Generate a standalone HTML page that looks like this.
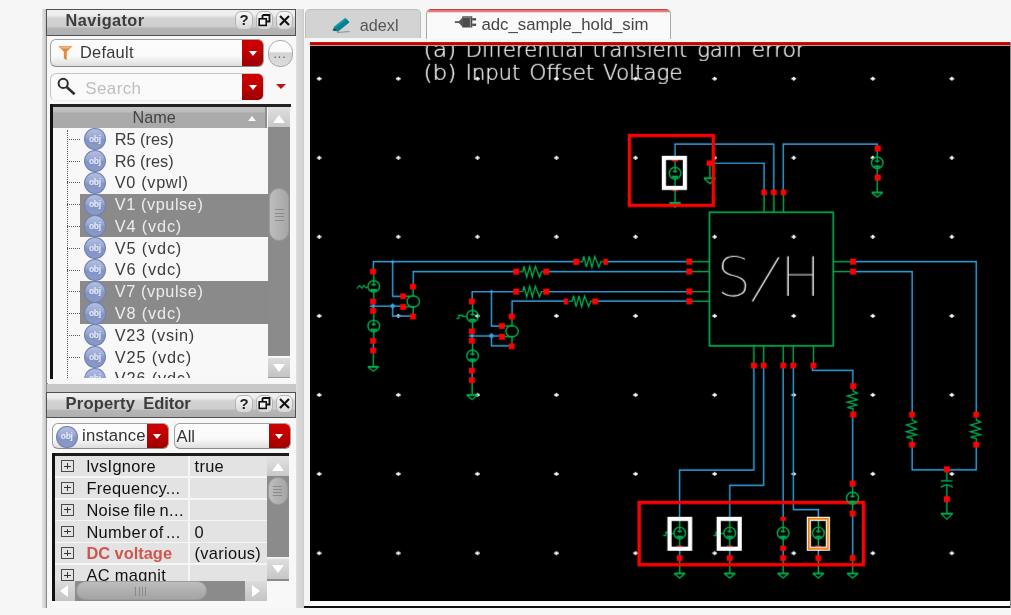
<!DOCTYPE html><html><head><meta charset="utf-8"><title>adc_sample_hold_sim</title><style>
html,body{margin:0;padding:0}
body{width:1011px;height:615px;overflow:hidden;background:#f6f6f6;position:relative;font-family:"Liberation Sans","DejaVu Sans",sans-serif;font-size:16.5px;color:#333}
.a{position:absolute}
.t{position:absolute;white-space:nowrap;line-height:20px}
.tb{border:1px solid #505050;box-sizing:border-box;background:linear-gradient(#f0f0f0 0,#ededed 21%,#d3d3d3 33%,#cecece 66%,#b5b5b5 73%,#b0b0b0 100%)}
.tbt{font-weight:bold;font-size:16.6px;color:#3c3c3c}
.wb{box-sizing:border-box;border:1px solid #b4b4b4;border-radius:6px;background:linear-gradient(#f8f8f8,#d8d8d8);width:17.5px;height:18.5px}
.cb{box-sizing:border-box;border:1px solid #a0a0a0;border-bottom-color:#888;border-radius:6px;background:linear-gradient(#fcfcfc 0,#fafafa 60%,#dedede 100%);overflow:hidden}
.rb{position:absolute;right:-1px;top:-1px;bottom:-1px;border-radius:0 6px 6px 0;background:linear-gradient(#d00000 0,#c00000 45%,#980000 100%)}
.rb:after{content:"";position:absolute;left:50%;top:50%;margin:-2.6px 0 0 -4.8px;border:4.8px solid transparent;border-top:5px solid #fff;border-bottom:0}
.row{position:absolute;left:80px;width:188px;height:21.8px;background:#8a8a8a}
.ic{position:absolute;width:21.8px;height:22.2px;border-radius:50%;box-sizing:border-box;border:1.6px solid #6f81b2;background:linear-gradient(#b2bfe2 0,#99a9d3 40%,#8393c3 55%,#8a9bc9 100%)}
.ic span{position:absolute;left:0;right:0;top:4.5px;text-align:center;font-size:8.5px;line-height:10px;color:#e8ecf8;font-weight:bold;letter-spacing:-.3px}
.pm{position:absolute;left:61px;width:12.6px;height:11.8px;box-sizing:border-box;border:1px solid #4a4a4a}
.pm:before{content:"";position:absolute;left:2px;right:2px;top:4.4px;height:1px;background:#333}
.pm:after{content:"";position:absolute;top:2px;bottom:2px;left:4.8px;width:1px;background:#333}
.pt{color:#111}
</style></head><body><div id="w" style="position:absolute;left:0;top:0;width:1011px;height:615px;will-change:transform">
<div class="a" style="left:42px;top:9px;width:4px;height:599px;background:linear-gradient(90deg,#e6e6e6,#d4d4d4 60%,#c4c4c4)"></div><div class="a" style="left:46px;top:9px;width:1.6px;height:599px;background:#8c8c8c"></div>
<div class="a" style="left:295.5px;top:9px;width:8.5px;height:599px;background:linear-gradient(90deg,#e2e2e2 0,#d6d6d6 25%,#d4d4d4 75%,#cacaca 100%)"></div>
<div class="a" style="left:46.5px;top:35px;width:249px;height:348px;background:#f8f8f8"></div>
<div class="a" style="left:46.5px;top:417px;width:249px;height:191px;background:#f8f8f8"></div>
<div class="a" style="left:46.5px;top:383.5px;width:249px;height:8.5px;background:#c8c8c8"></div>
<div class="a tb" style="left:46px;top:9px;width:250px;height:26.5px"></div>
<div class="t tbt" style="left:65.6px;top:10.3px;font-size:16.3px;letter-spacing:.42px">Navigator</div>
<div class="a wb" style="left:235.2px;top:11px"></div>
<div class="a wb" style="left:255.5px;top:11px"></div>
<div class="a wb" style="left:275.8px;top:11px"></div>
<div class="t" style="left:239.6px;top:10px;font-weight:bold;font-size:15px;color:#222">?</div>
<svg class="a" style="left:258px;top:13.6px" width="13" height="13" viewBox="0 0 13 13"><path d="M4.5 1h7v6.5h-2.5M4.5 1v3" fill="none" stroke="#111" stroke-width="1.8"/><rect x="1.2" y="4.8" width="7" height="6.6" fill="#f4f4f4" stroke="#111" stroke-width="1.6"/></svg>
<svg class="a" style="left:279.2px;top:14.8px" width="11" height="11" viewBox="0 0 11 11"><path d="M1 1L10 10M10 1L1 10" stroke="#111" stroke-width="2.1"/></svg>
<div class="a cb" style="left:50.2px;top:39.2px;width:214.3px;height:28px"><div class="rb" style="width:22px"></div></div>
<svg class="a" style="left:56.2px;top:44.8px" width="18.6" height="16.6" viewBox="0 0 14 15"><path d="M0.5 0.8h13l-5.2 5.4v7.6l-2.6 -1.6v-6z" fill="#e08a3c"/><path d="M1.5 1.2h11l-2 2h-7z" fill="#f0b080"/></svg>
<div class="t" style="left:80px;top:41.9px;font-size:16.4px;letter-spacing:.25px;color:#3a3a3a">Default</div>
<div class="a" style="left:268.4px;top:40px;width:24.4px;height:26.6px;box-sizing:border-box;border:1px solid #aaa;border-radius:12px;background:linear-gradient(#fdfdfd 0,#fafafa 42%,#d4d4d4 48%,#dcdcdc 100%)"></div>
<div class="t" style="left:273.2px;top:43.4px;font-size:14px;color:#6c6c6c;letter-spacing:.5px">...</div>
<div class="a cb" style="left:50.2px;top:73.2px;width:214.3px;height:28.3px;border-color:#c4c4c4 #d0d0d0 #ececec #c4c4c4;background:#fafafa"><div class="rb" style="width:22px"></div></div>
<svg class="a" style="left:55px;top:75px" width="24" height="24" viewBox="0 0 24 24"><circle cx="8.2" cy="8.4" r="4.6" fill="none" stroke="#2e2e2e" stroke-width="2"/><path d="M11.6 12L19.6 19.2" stroke="#2e2e2e" stroke-width="2.6"/></svg>
<div class="t" style="left:85.3px;top:79px;font-size:17px;letter-spacing:.38px;color:#bebebe">Search</div>
<div class="a" style="left:275.8px;top:84px;border:5.2px solid transparent;border-top:5.6px solid #c01010;border-bottom:0"></div>
<div class="a" style="left:50px;top:104px;width:241.4px;height:2.8px;background:#222"></div>
<div class="a" style="left:50px;top:104px;width:3.2px;height:274.5px;background:#111"></div>
<div class="a" style="left:53.2px;top:106.8px;width:213.6px;height:21.2px;background:linear-gradient(#c4c4c4 0,#bcbcbc 22%,#ababab 30%,#a9a9a9 100%);border-right:2px solid #8e8e8e;box-sizing:border-box"></div>
<div class="t" style="left:132.6px;top:107.4px;font-size:16.2px;color:#444">Name</div>
<div class="a" style="left:248.2px;top:116px;border:4.3px solid transparent;border-bottom:5.6px solid #fbfbfb;border-top:0"></div>
<div class="a" style="left:268.4px;top:106.8px;width:21.4px;height:271px;background:#8b8b8b"></div>
<div class="a" style="left:268.4px;top:106.8px;width:21.4px;height:20.6px;background:linear-gradient(#e0e0e0,#c6c6c6)"></div>
<div class="a" style="left:273px;top:115px;border:6px solid transparent;border-bottom:8px solid #fff;border-top:0"></div>
<div class="a" style="left:268.4px;top:356px;width:21.4px;height:2.2px;background:#f8f8f8"></div>
<div class="a" style="left:268.4px;top:358px;width:21.4px;height:19.6px;background:linear-gradient(#dcdcdc,#c4c4c4);border-bottom:1px solid #9a9a9a;box-sizing:border-box"></div>
<div class="a" style="left:273px;top:364px;border:6px solid transparent;border-top:8px solid #fff;border-bottom:0"></div>
<div class="a" style="left:269.4px;top:188.2px;width:19.6px;height:52.4px;border-radius:10px;background:linear-gradient(90deg,#bdbdbd,#b2b2b2 50%,#a6a6a6);box-sizing:border-box;border:1px solid #9c9c9c"></div>
<div class="a" style="left:274.6px;top:209.4px;width:9px;height:1px;background:#8a8a8a"></div>
<div class="a" style="left:274.6px;top:212.8px;width:9px;height:1px;background:#8a8a8a"></div>
<div class="a" style="left:274.6px;top:216.20000000000002px;width:9px;height:1px;background:#8a8a8a"></div>
<div class="a" style="left:274.6px;top:219.6px;width:9px;height:1px;background:#8a8a8a"></div>
<div class="a" style="left:53.2px;top:128px;width:215.2px;height:250.4px;overflow:hidden">
<div class="a" style="left:13.6px;top:2px;width:0;height:260px;border-left:1.2px dotted #555"></div>
<div class="a" style="left:26.8px;top:65.6px;width:190px;height:21.8px;background:#8a8a8a"></div>
<div class="a" style="left:26.8px;top:87.4px;width:190px;height:21.8px;background:#8a8a8a"></div>
<div class="a" style="left:26.8px;top:152.8px;width:190px;height:21.8px;background:#8a8a8a"></div>
<div class="a" style="left:26.8px;top:174.5px;width:190px;height:21.8px;background:#8a8a8a"></div>
<div class="a" style="left:14px;top:10.8px;width:13px;height:0;border-top:1.2px dotted #555"></div>
<div class="ic" style="left:30.8px;top:0.2px"><span>obj</span></div>
<div class="t" style="left:61.6px;top:0.7px;font-size:16.3px;letter-spacing:0.00px;color:#3c3c3c">R5 (res)</div>
<div class="a" style="left:14px;top:32.6px;width:13px;height:0;border-top:1.2px dotted #555"></div>
<div class="ic" style="left:30.8px;top:22.0px"><span>obj</span></div>
<div class="t" style="left:61.6px;top:22.5px;font-size:16.3px;letter-spacing:0.00px;color:#3c3c3c">R6 (res)</div>
<div class="a" style="left:14px;top:54.4px;width:13px;height:0;border-top:1.2px dotted #555"></div>
<div class="ic" style="left:30.8px;top:43.8px"><span>obj</span></div>
<div class="t" style="left:61.6px;top:44.3px;font-size:16.3px;letter-spacing:0.67px;color:#3c3c3c">V0 (vpwl)</div>
<div class="a" style="left:14px;top:76.1px;width:13px;height:0;border-top:1.2px dotted #555"></div>
<div class="ic" style="left:30.8px;top:65.5px"><span>obj</span></div>
<div class="t" style="left:61.6px;top:66.0px;font-size:16.3px;letter-spacing:0.57px;color:#ececec">V1 (vpulse)</div>
<div class="a" style="left:14px;top:97.9px;width:13px;height:0;border-top:1.2px dotted #555"></div>
<div class="ic" style="left:30.8px;top:87.3px"><span>obj</span></div>
<div class="t" style="left:61.6px;top:87.8px;font-size:16.3px;letter-spacing:0.84px;color:#ececec">V4 (vdc)</div>
<div class="a" style="left:14px;top:119.7px;width:13px;height:0;border-top:1.2px dotted #555"></div>
<div class="ic" style="left:30.8px;top:109.1px"><span>obj</span></div>
<div class="t" style="left:61.6px;top:109.6px;font-size:16.3px;letter-spacing:0.84px;color:#3c3c3c">V5 (vdc)</div>
<div class="a" style="left:14px;top:141.5px;width:13px;height:0;border-top:1.2px dotted #555"></div>
<div class="ic" style="left:30.8px;top:130.9px"><span>obj</span></div>
<div class="t" style="left:61.6px;top:131.4px;font-size:16.3px;letter-spacing:0.84px;color:#3c3c3c">V6 (vdc)</div>
<div class="a" style="left:14px;top:163.3px;width:13px;height:0;border-top:1.2px dotted #555"></div>
<div class="ic" style="left:30.8px;top:152.7px"><span>obj</span></div>
<div class="t" style="left:61.6px;top:153.2px;font-size:16.3px;letter-spacing:0.57px;color:#ececec">V7 (vpulse)</div>
<div class="a" style="left:14px;top:185.0px;width:13px;height:0;border-top:1.2px dotted #555"></div>
<div class="ic" style="left:30.8px;top:174.4px"><span>obj</span></div>
<div class="t" style="left:61.6px;top:174.9px;font-size:16.3px;letter-spacing:0.84px;color:#ececec">V8 (vdc)</div>
<div class="a" style="left:14px;top:206.8px;width:13px;height:0;border-top:1.2px dotted #555"></div>
<div class="ic" style="left:30.8px;top:196.2px"><span>obj</span></div>
<div class="t" style="left:61.6px;top:196.7px;font-size:16.3px;letter-spacing:0.68px;color:#3c3c3c">V23 (vsin)</div>
<div class="a" style="left:14px;top:228.6px;width:13px;height:0;border-top:1.2px dotted #555"></div>
<div class="ic" style="left:30.8px;top:218.0px"><span>obj</span></div>
<div class="t" style="left:61.6px;top:218.5px;font-size:16.3px;letter-spacing:0.85px;color:#3c3c3c">V25 (vdc)</div>
<div class="a" style="left:14px;top:250.4px;width:13px;height:0;border-top:1.2px dotted #555"></div>
<div class="ic" style="left:30.8px;top:239.8px"><span>obj</span></div>
<div class="t" style="left:61.6px;top:240.3px;font-size:16.3px;letter-spacing:0.85px;color:#3c3c3c">V26 (vdc)</div>
</div>
<div class="a tb" style="left:46px;top:392px;width:250px;height:26px"></div>
<div class="t tbt" style="left:65.6px;top:393.5px;letter-spacing:.15px">Property <span style="position:absolute;left:77.6px;top:0;letter-spacing:-.1px">Editor</span></div>
<div class="a wb" style="left:235.2px;top:394.6px"></div>
<div class="a wb" style="left:255.5px;top:394.6px"></div>
<div class="a wb" style="left:275.8px;top:394.6px"></div>
<div class="t" style="left:239.6px;top:393.6px;font-weight:bold;font-size:15px;color:#222">?</div>
<svg class="a" style="left:258px;top:397.20000000000005px" width="13" height="13" viewBox="0 0 13 13"><path d="M4.5 1h7v6.5h-2.5M4.5 1v3" fill="none" stroke="#111" stroke-width="1.8"/><rect x="1.2" y="4.8" width="7" height="6.6" fill="#f4f4f4" stroke="#111" stroke-width="1.6"/></svg>
<svg class="a" style="left:279.2px;top:398.40000000000003px" width="11" height="11" viewBox="0 0 11 11"><path d="M1 1L10 10M10 1L1 10" stroke="#111" stroke-width="2.1"/></svg>
<div class="a cb" style="left:52px;top:423.4px;width:117px;height:26px"><div class="rb" style="width:22px"></div></div>
<div class="ic" style="left:55.8px;top:425.8px"><span>obj</span></div>
<div class="t" style="left:82px;top:426.4px;font-size:16.7px;letter-spacing:.2px;color:#333">instance</div>
<div class="a cb" style="left:173.5px;top:423.4px;width:117.4px;height:26px"><div class="rb" style="width:22.4px"></div></div>
<div class="t" style="left:176.6px;top:426.6px;font-size:16.6px;color:#333">All</div>
<div class="a" style="left:51.8px;top:453px;width:237.4px;height:3px;background:#1c1c1c"></div>
<div class="a" style="left:51.8px;top:453px;width:3px;height:148px;background:#111"></div>
<div class="a" style="left:54.8px;top:456px;width:212.4px;height:124.6px;background:#e3e3e3;overflow:hidden">
<div class="pm" style="left:6.2px;top:4.4px"></div>
<div class="t pt" style="left:31.6px;top:0.4px;font-size:16.4px;letter-spacing:.35px;word-spacing:0px">lvsIgnore</div>
<div class="t pt" style="left:139.8px;top:0.4px;font-size:16.4px;letter-spacing:.3px">true</div>
<div class="a" style="left:0;top:20.4px;width:213px;height:1.6px;background:#f6f6f6"></div>
<div class="pm" style="left:6.2px;top:26.1px"></div>
<div class="t pt" style="left:31.6px;top:22.1px;font-size:16.4px;letter-spacing:.35px;word-spacing:0px">Frequency...</div>
<div class="a" style="left:0;top:42.1px;width:213px;height:1.6px;background:#f6f6f6"></div>
<div class="pm" style="left:6.2px;top:47.9px"></div>
<div class="t pt" style="left:31.6px;top:43.9px;font-size:16.4px;letter-spacing:.35px;word-spacing:-1.3px">Noise file n...</div>
<div class="a" style="left:0;top:63.9px;width:213px;height:1.6px;background:#f6f6f6"></div>
<div class="pm" style="left:6.2px;top:69.7px"></div>
<div class="t pt" style="left:31.6px;top:65.7px;font-size:16.4px;letter-spacing:.35px;word-spacing:-2.5px">Number of ...</div>
<div class="t pt" style="left:139.8px;top:65.7px;font-size:16.4px;letter-spacing:.3px">0</div>
<div class="a" style="left:0;top:85.6px;width:213px;height:1.6px;background:#f6f6f6"></div>
<div class="pm" style="left:6.2px;top:91.4px"></div>
<div class="t" style="left:31.6px;top:87.4px;font-size:16.4px;font-weight:bold;color:#cf5650">DC voltage</div>
<div class="t pt" style="left:139.8px;top:87.4px;font-size:16.4px;letter-spacing:.3px">(various)</div>
<div class="a" style="left:0;top:107.3px;width:213px;height:1.6px;background:#f6f6f6"></div>
<div class="pm" style="left:6.2px;top:113.2px"></div>
<div class="t pt" style="left:31.6px;top:109.2px;font-size:16.4px;letter-spacing:.35px;word-spacing:0px">AC magnit</div>
<div class="a" style="left:133.4px;top:0;width:2px;height:130px;background:#f6f6f6"></div>
</div>
<div class="a" style="left:267.2px;top:456px;width:21.6px;height:124.6px;background:#8b8b8b"></div>
<div class="a" style="left:267.2px;top:456px;width:21.6px;height:20px;background:linear-gradient(#e2e2e2,#c8c8c8)"></div>
<div class="a" style="left:272px;top:463.4px;border:6px solid transparent;border-bottom:8px solid #fff;border-top:0"></div>
<div class="a" style="left:268.2px;top:477px;width:19.6px;height:28px;border-radius:10px;background:linear-gradient(90deg,#bdbdbd,#b2b2b2 50%,#a6a6a6);box-sizing:border-box;border:1px solid #9c9c9c"></div>
<div class="a" style="left:273.4px;top:485.6px;width:9px;height:1px;background:#8a8a8a"></div>
<div class="a" style="left:273.4px;top:488.8px;width:9px;height:1px;background:#8a8a8a"></div>
<div class="a" style="left:273.4px;top:492.0px;width:9px;height:1px;background:#8a8a8a"></div>
<div class="a" style="left:273.4px;top:495.20000000000005px;width:9px;height:1px;background:#8a8a8a"></div>
<div class="a" style="left:267.2px;top:557px;width:21.6px;height:2px;background:#f0f0f0"></div>
<div class="a" style="left:267.2px;top:559px;width:21.6px;height:20px;background:linear-gradient(#dedede,#c6c6c6)"></div>
<div class="a" style="left:272px;top:565px;border:6px solid transparent;border-top:8px solid #fff;border-bottom:0"></div>
<div class="a" style="left:54.8px;top:580.6px;width:212.4px;height:20.6px;background:#8b8b8b"></div>
<div class="a" style="left:54.8px;top:580.6px;width:20px;height:20.6px;background:linear-gradient(#dcdcdc,#c4c4c4)"></div>
<div class="a" style="left:60px;top:584.8px;border:6px solid transparent;border-right:8px solid #fff;border-left:0"></div>
<div class="a" style="left:76.4px;top:581.4px;width:130.4px;height:19px;border-radius:10px;background:linear-gradient(#bdbdbd,#b0b0b0 50%,#a4a4a4);box-sizing:border-box;border:1px solid #9c9c9c"></div>
<div class="a" style="left:135.4px;top:586.6px;width:1px;height:9px;background:#8a8a8a"></div>
<div class="a" style="left:138.6px;top:586.6px;width:1px;height:9px;background:#8a8a8a"></div>
<div class="a" style="left:141.8px;top:586.6px;width:1px;height:9px;background:#8a8a8a"></div>
<div class="a" style="left:145.0px;top:586.6px;width:1px;height:9px;background:#8a8a8a"></div>
<div class="a" style="left:244.6px;top:580.6px;width:22.6px;height:20.6px;background:linear-gradient(#dcdcdc,#c4c4c4)"></div>
<div class="a" style="left:252px;top:584.8px;border:6px solid transparent;border-left:8px solid #fff;border-right:0"></div>
<div class="a" style="left:304.6px;top:9px;width:116.6px;height:29.4px;box-sizing:border-box;border:1px solid #bdbdbd;border-bottom:0;border-radius:5px 5px 0 0;background:#d3d3d3"></div>
<svg class="a" style="left:330px;top:15px" width="24" height="20" viewBox="330 15 24 20"><path d="M337 32.6L349.6 31.4" stroke="#9c9c9c" stroke-width="1.4"/><path d="M332.6 30.2L334.2 26.6L345.4 17.8L349.4 22.2L338 31.4z" fill="#0c9aa8"/><path d="M332.6 30.2L335.6 27.8L346.8 19.2L349.4 22.2L338 31.4z" fill="#08808e"/><path d="M332.6 30.2L334.6 28.6L336.4 30.8z" fill="#234"/></svg>
<div class="t" style="left:359.8px;top:15.4px;font-size:16.2px;color:#555">adexl</div>
<div class="a" style="left:426.4px;top:8.8px;width:244.2px;height:30px;box-sizing:border-box;border:1px solid #a8a8a8;border-top:0;border-bottom:0;border-radius:5px 5px 0 0;background:linear-gradient(#c44040 0,#c84848 1.3px,#e07474 1.5px,#e88c8c 3px,#fafafa 3.8px,#fafafa 100%)"></div>
<svg class="a" style="left:454px;top:15px" width="24" height="14" viewBox="454 15 24 14"><path d="M454.9 22.1H460" stroke="#585858" stroke-width="1.9"/><path d="M458.8 21.2L462.6 17.4V26.8L458.8 23z" fill="#5a5a5a"/><rect x="462.2" y="16.3" width="10.1" height="11.2" fill="#4c4c4c"/><rect x="463" y="16.3" width="8" height="1.6" fill="#808080"/><rect x="469.8" y="17.6" width="1.2" height="9.4" fill="#8c8c8c"/><rect x="472.2" y="18.1" width="3.9" height="2.4" fill="#505050"/><rect x="472.2" y="23.6" width="3.9" height="2.4" fill="#505050"/></svg>
<div class="t" style="left:481.4px;top:14.6px;font-size:16.8px;color:#454545">adc_sample_hold_sim</div>
<div class="a" style="left:310px;top:42.1px;width:700px;height:4.1px;background:linear-gradient(#d42020 0,#c80000 25%,#c40000 74%,#b0a0a0 78%,#a8a8a8 100%)"></div>
<div class="a" style="left:304px;top:38.4px;width:6.4px;height:570px;background:#f4f4f4"></div>
<div class="a" style="left:304px;top:601.1px;width:707px;height:5px;background:#fbfbfb"></div>
<div class="a" style="left:304.2px;top:606.1px;width:706.8px;height:2.3px;background:#101010"></div><div class="a" style="left:1010px;top:42px;width:1px;height:566px;background:#8a8a8a"></div>
<svg class="a" style="left:310.2px;top:46.2px" width="699.8" height="554.9" viewBox="310.2 46.2 699.8 554.9" font-family='"DejaVu Sans Light","DejaVu Sans","Liberation Sans",sans-serif' font-weight="200">
<rect x="310" y="46" width="702" height="556" fill="#000"/>
<path d="M317.1 78.9h4.6M319.4 77v3.8" stroke="#fff" stroke-width="1.7"/>
<path d="M317.1 158h4.6M319.4 156.1v3.8" stroke="#fff" stroke-width="1.7"/>
<path d="M317.1 237h4.6M319.4 235.1v3.8" stroke="#fff" stroke-width="1.7"/>
<path d="M317.1 316.1h4.6M319.4 314.2v3.8" stroke="#fff" stroke-width="1.7"/>
<path d="M317.1 395.1h4.6M319.4 393.2v3.8" stroke="#fff" stroke-width="1.7"/>
<path d="M317.1 474.2h4.6M319.4 472.3v3.8" stroke="#fff" stroke-width="1.7"/>
<path d="M317.1 553.3h4.6M319.4 551.4v3.8" stroke="#fff" stroke-width="1.7"/>
<path d="M396.2 78.9h4.6M398.5 77v3.8" stroke="#fff" stroke-width="1.7"/>
<path d="M396.2 158h4.6M398.5 156.1v3.8" stroke="#fff" stroke-width="1.7"/>
<path d="M396.2 237h4.6M398.5 235.1v3.8" stroke="#fff" stroke-width="1.7"/>
<path d="M396.2 316.1h4.6M398.5 314.2v3.8" stroke="#fff" stroke-width="1.7"/>
<path d="M396.2 395.1h4.6M398.5 393.2v3.8" stroke="#fff" stroke-width="1.7"/>
<path d="M396.2 474.2h4.6M398.5 472.3v3.8" stroke="#fff" stroke-width="1.7"/>
<path d="M396.2 553.3h4.6M398.5 551.4v3.8" stroke="#fff" stroke-width="1.7"/>
<path d="M475.3 78.9h4.6M477.6 77v3.8" stroke="#fff" stroke-width="1.7"/>
<path d="M475.3 158h4.6M477.6 156.1v3.8" stroke="#fff" stroke-width="1.7"/>
<path d="M475.3 237h4.6M477.6 235.1v3.8" stroke="#fff" stroke-width="1.7"/>
<path d="M475.3 316.1h4.6M477.6 314.2v3.8" stroke="#fff" stroke-width="1.7"/>
<path d="M475.3 395.1h4.6M477.6 393.2v3.8" stroke="#fff" stroke-width="1.7"/>
<path d="M475.3 474.2h4.6M477.6 472.3v3.8" stroke="#fff" stroke-width="1.7"/>
<path d="M475.3 553.3h4.6M477.6 551.4v3.8" stroke="#fff" stroke-width="1.7"/>
<path d="M554.3 78.9h4.6M556.6 77v3.8" stroke="#fff" stroke-width="1.7"/>
<path d="M554.3 158h4.6M556.6 156.1v3.8" stroke="#fff" stroke-width="1.7"/>
<path d="M554.3 237h4.6M556.6 235.1v3.8" stroke="#fff" stroke-width="1.7"/>
<path d="M554.3 316.1h4.6M556.6 314.2v3.8" stroke="#fff" stroke-width="1.7"/>
<path d="M554.3 395.1h4.6M556.6 393.2v3.8" stroke="#fff" stroke-width="1.7"/>
<path d="M554.3 474.2h4.6M556.6 472.3v3.8" stroke="#fff" stroke-width="1.7"/>
<path d="M554.3 553.3h4.6M556.6 551.4v3.8" stroke="#fff" stroke-width="1.7"/>
<path d="M633.4 78.9h4.6M635.7 77v3.8" stroke="#fff" stroke-width="1.7"/>
<path d="M633.4 158h4.6M635.7 156.1v3.8" stroke="#fff" stroke-width="1.7"/>
<path d="M633.4 237h4.6M635.7 235.1v3.8" stroke="#fff" stroke-width="1.7"/>
<path d="M633.4 316.1h4.6M635.7 314.2v3.8" stroke="#fff" stroke-width="1.7"/>
<path d="M633.4 395.1h4.6M635.7 393.2v3.8" stroke="#fff" stroke-width="1.7"/>
<path d="M633.4 474.2h4.6M635.7 472.3v3.8" stroke="#fff" stroke-width="1.7"/>
<path d="M633.4 553.3h4.6M635.7 551.4v3.8" stroke="#fff" stroke-width="1.7"/>
<path d="M712.5 78.9h4.6M714.8 77v3.8" stroke="#fff" stroke-width="1.7"/>
<path d="M712.5 158h4.6M714.8 156.1v3.8" stroke="#fff" stroke-width="1.7"/>
<path d="M712.5 237h4.6M714.8 235.1v3.8" stroke="#fff" stroke-width="1.7"/>
<path d="M712.5 316.1h4.6M714.8 314.2v3.8" stroke="#fff" stroke-width="1.7"/>
<path d="M712.5 395.1h4.6M714.8 393.2v3.8" stroke="#fff" stroke-width="1.7"/>
<path d="M712.5 474.2h4.6M714.8 472.3v3.8" stroke="#fff" stroke-width="1.7"/>
<path d="M712.5 553.3h4.6M714.8 551.4v3.8" stroke="#fff" stroke-width="1.7"/>
<path d="M791.6 78.9h4.6M793.9 77v3.8" stroke="#fff" stroke-width="1.7"/>
<path d="M791.6 158h4.6M793.9 156.1v3.8" stroke="#fff" stroke-width="1.7"/>
<path d="M791.6 237h4.6M793.9 235.1v3.8" stroke="#fff" stroke-width="1.7"/>
<path d="M791.6 316.1h4.6M793.9 314.2v3.8" stroke="#fff" stroke-width="1.7"/>
<path d="M791.6 395.1h4.6M793.9 393.2v3.8" stroke="#fff" stroke-width="1.7"/>
<path d="M791.6 474.2h4.6M793.9 472.3v3.8" stroke="#fff" stroke-width="1.7"/>
<path d="M791.6 553.3h4.6M793.9 551.4v3.8" stroke="#fff" stroke-width="1.7"/>
<path d="M870.7 78.9h4.6M873 77v3.8" stroke="#fff" stroke-width="1.7"/>
<path d="M870.7 158h4.6M873 156.1v3.8" stroke="#fff" stroke-width="1.7"/>
<path d="M870.7 237h4.6M873 235.1v3.8" stroke="#fff" stroke-width="1.7"/>
<path d="M870.7 316.1h4.6M873 314.2v3.8" stroke="#fff" stroke-width="1.7"/>
<path d="M870.7 395.1h4.6M873 393.2v3.8" stroke="#fff" stroke-width="1.7"/>
<path d="M870.7 474.2h4.6M873 472.3v3.8" stroke="#fff" stroke-width="1.7"/>
<path d="M870.7 553.3h4.6M873 551.4v3.8" stroke="#fff" stroke-width="1.7"/>
<path d="M949.7 78.9h4.6M952 77v3.8" stroke="#fff" stroke-width="1.7"/>
<path d="M949.7 158h4.6M952 156.1v3.8" stroke="#fff" stroke-width="1.7"/>
<path d="M949.7 237h4.6M952 235.1v3.8" stroke="#fff" stroke-width="1.7"/>
<path d="M949.7 316.1h4.6M952 314.2v3.8" stroke="#fff" stroke-width="1.7"/>
<path d="M949.7 395.1h4.6M952 393.2v3.8" stroke="#fff" stroke-width="1.7"/>
<path d="M949.7 474.2h4.6M952 472.3v3.8" stroke="#fff" stroke-width="1.7"/>
<path d="M949.7 553.3h4.6M952 551.4v3.8" stroke="#fff" stroke-width="1.7"/>
<rect x="709.6" y="212.4" width="123.8" height="133.6" fill="none" stroke="#00b050" stroke-width="1.7"/>
<polyline points="689.6,261.8 709.6,261.8" fill="none" stroke="#00b050" stroke-width="1.4"/>
<polyline points="689.6,271.7 709.6,271.7" fill="none" stroke="#00b050" stroke-width="1.4"/>
<polyline points="689.6,291.7 709.6,291.7" fill="none" stroke="#00b050" stroke-width="1.4"/>
<polyline points="689.6,301.4 709.6,301.4" fill="none" stroke="#00b050" stroke-width="1.4"/>
<polyline points="833.4,261.8 853.2,261.8" fill="none" stroke="#00b050" stroke-width="1.4"/>
<polyline points="833.4,271.7 853.2,271.7" fill="none" stroke="#00b050" stroke-width="1.4"/>
<polyline points="764.2,192.6 764.2,212.4" fill="none" stroke="#00b050" stroke-width="1.4"/>
<polyline points="774,192.6 774,212.4" fill="none" stroke="#00b050" stroke-width="1.4"/>
<polyline points="783.6,192.6 783.6,212.4" fill="none" stroke="#00b050" stroke-width="1.4"/>
<polyline points="754,346 754,365.6" fill="none" stroke="#00b050" stroke-width="1.4"/>
<polyline points="763.8,346 763.8,365.6" fill="none" stroke="#00b050" stroke-width="1.4"/>
<polyline points="783.4,346 783.4,365.6" fill="none" stroke="#00b050" stroke-width="1.4"/>
<polyline points="793.4,346 793.4,365.6" fill="none" stroke="#00b050" stroke-width="1.4"/>
<polyline points="813.6,346 813.6,365.6" fill="none" stroke="#00b050" stroke-width="1.4"/>
<polyline points="373.5,271.8 373.5,261.8 576.4,261.8" fill="none" stroke="#35a4e4" stroke-width="1.4"/>
<polyline points="605.6,261.8 689.6,261.8" fill="none" stroke="#35a4e4" stroke-width="1.4"/>
<polyline points="413.4,286.8 413.4,271.8 516.4,271.8" fill="none" stroke="#35a4e4" stroke-width="1.4"/>
<polyline points="546.4,271.8 689.6,271.8" fill="none" stroke="#35a4e4" stroke-width="1.4"/>
<polyline points="472.3,301.4 472.3,291.7 516.4,291.7" fill="none" stroke="#35a4e4" stroke-width="1.4"/>
<polyline points="546.4,291.7 689.6,291.7" fill="none" stroke="#35a4e4" stroke-width="1.4"/>
<polyline points="512.2,316.6 512.2,301.3 566,301.3" fill="none" stroke="#35a4e4" stroke-width="1.4"/>
<polyline points="595.4,301.3 689.6,301.3" fill="none" stroke="#35a4e4" stroke-width="1.4"/>
<polyline points="579.3,261.8 582.6,261.8 584,256.5 586.5,267.3 589.4,256.5 592,267.3 595,256.5 599,267.3 601,261.8 603.8,261.8" fill="none" stroke="#00b050" stroke-width="1.3"/>
<polyline points="519.4,271.8 522.8,271.8 524.2,266.5 526.8,277.3 529.8,266.5 532.4,277.3 535.5,266.5 539.6,277.3 541.7,271.8 544.6,271.8" fill="none" stroke="#00b050" stroke-width="1.3"/>
<polyline points="519.4,291.7 522.8,291.7 524.2,286.4 526.8,297.2 529.8,286.4 532.4,297.2 535.5,286.4 539.6,297.2 541.7,291.7 544.6,291.7" fill="none" stroke="#00b050" stroke-width="1.3"/>
<polyline points="568.9,301.3 572.2,301.3 573.7,296 576.2,306.8 579.1,296 581.7,306.8 584.7,296 588.8,306.8 590.8,301.3 593.6,301.3" fill="none" stroke="#00b050" stroke-width="1.3"/>
<polyline points="373.5,301.6 373.5,311" fill="none" stroke="#35a4e4" stroke-width="1.4"/>
<polyline points="370.1,306.3 400.7,306.3" fill="none" stroke="#35a4e4" stroke-width="1.4"/>
<polyline points="392.8,261.9 392.8,296.5 403.3,296.5" fill="none" stroke="#35a4e4" stroke-width="1.4"/>
<polyline points="392.8,306.3 392.8,316.2 413.1,316.2" fill="none" stroke="#35a4e4" stroke-width="1.4"/>
<polyline points="373.5,341 373.5,350.6" fill="none" stroke="#35a4e4" stroke-width="1.4"/>
<path d="M392.8 259.9l2 2l-2 2l-2 -2z" fill="#35a4e4"/>
<path d="M392.8 303.3l3 3l-3 3l-3 -3z" fill="#35a4e4"/>
<path d="M373.5 304.1l2.2 2.2l-2.2 2.2l-2.2 -2.2z" fill="#35a4e4"/>
<polyline points="373.9,271.8 373.9,286.3" fill="none" stroke="#00b050" stroke-width="1.4"/>
<polyline points="373.9,289.9 373.9,301.6" fill="none" stroke="#00b050" stroke-width="1.4"/>
<circle cx="373.9" cy="286.5" r="5.8" fill="none" stroke="#00b050" stroke-width="1.4"/>
<polyline points="371.6,284.8 376.2,284.8" fill="none" stroke="#00b050" stroke-width="1.4"/>
<polyline points="370.9,290 376.9,290" fill="none" stroke="#00b050" stroke-width="2"/>
<polyline points="357.1,288.9 359.7,285.7 362.1,288.5 363.9,285.5 366.3,288.1 368.1,287.1" fill="none" stroke="#00b050" stroke-width="1.2"/>
<polyline points="373.9,311 373.9,326" fill="none" stroke="#00b050" stroke-width="1.4"/>
<polyline points="373.9,329.6 373.9,341" fill="none" stroke="#00b050" stroke-width="1.4"/>
<circle cx="373.9" cy="326.2" r="5.8" fill="none" stroke="#00b050" stroke-width="1.4"/>
<polyline points="371.6,324.5 376.2,324.5" fill="none" stroke="#00b050" stroke-width="1.4"/>
<polyline points="370.9,329.7 376.9,329.7" fill="none" stroke="#00b050" stroke-width="2"/>
<polyline points="373.5,350.6 373.5,367" fill="none" stroke="#00b050" stroke-width="1.4"/>
<polyline points="367.9,367 379.1,367" fill="none" stroke="#00b050" stroke-width="1.9"/>
<polyline points="368.3,367.3 373.5,371.5 378.7,367.3" fill="none" stroke="#00b050" stroke-width="1.3"/>
<polyline points="413.3,286.8 413.3,296.3" fill="none" stroke="#00b050" stroke-width="1.4"/>
<polyline points="413.3,307 413.3,316.6" fill="none" stroke="#00b050" stroke-width="1.4"/>
<polyline points="403.3,296.3 415.3,296.3" fill="none" stroke="#00b050" stroke-width="1.4"/>
<polyline points="403.3,307 415.3,307" fill="none" stroke="#00b050" stroke-width="1.4"/>
<rect x="407.2" y="296.3" width="12.4" height="10.7" rx="5.3" ry="5.3" fill="none" stroke="#00b050" stroke-width="1.4"/>
<rect x="370.3" y="268.9" width="5.8" height="5.8" fill="#ff0000"/>
<rect x="370.3" y="298.8" width="5.8" height="5.8" fill="#ff0000"/>
<rect x="370.3" y="308.2" width="5.8" height="5.8" fill="#ff0000"/>
<rect x="370.3" y="338.1" width="5.8" height="5.8" fill="#ff0000"/>
<rect x="370.3" y="347.7" width="5.8" height="5.8" fill="#ff0000"/>
<rect x="400.4" y="293.5" width="5.8" height="5.8" fill="#ff0000"/>
<rect x="400.4" y="304.2" width="5.8" height="5.8" fill="#ff0000"/>
<rect x="410.2" y="283.9" width="5.8" height="5.8" fill="#ff0000"/>
<rect x="410.2" y="313.8" width="5.8" height="5.8" fill="#ff0000"/>
<polyline points="472.3,331.4 472.3,340.8" fill="none" stroke="#35a4e4" stroke-width="1.4"/>
<polyline points="468.9,336.1 499.5,336.1" fill="none" stroke="#35a4e4" stroke-width="1.4"/>
<polyline points="491.6,291.7 491.6,326.3 502.1,326.3" fill="none" stroke="#35a4e4" stroke-width="1.4"/>
<polyline points="491.6,336.1 491.6,346 511.9,346" fill="none" stroke="#35a4e4" stroke-width="1.4"/>
<polyline points="472.3,370.8 472.3,380.4" fill="none" stroke="#35a4e4" stroke-width="1.4"/>
<path d="M491.6 289.7l2 2l-2 2l-2 -2z" fill="#35a4e4"/>
<path d="M491.6 333.1l3 3l-3 3l-3 -3z" fill="#35a4e4"/>
<path d="M472.3 333.9l2.2 2.2l-2.2 2.2l-2.2 -2.2z" fill="#35a4e4"/>
<polyline points="472.7,301.6 472.7,316.1" fill="none" stroke="#00b050" stroke-width="1.4"/>
<polyline points="472.7,319.7 472.7,331.4" fill="none" stroke="#00b050" stroke-width="1.4"/>
<circle cx="472.7" cy="316.3" r="5.8" fill="none" stroke="#00b050" stroke-width="1.4"/>
<polyline points="470.4,314.6 475,314.6" fill="none" stroke="#00b050" stroke-width="1.4"/>
<polyline points="469.7,319.8 475.7,319.8" fill="none" stroke="#00b050" stroke-width="2"/>
<polyline points="456.3,318.7 458.9,318.7 458.9,315.5 462.9,315.5 462.9,316.7 466.9,316.7" fill="none" stroke="#00b050" stroke-width="1.3"/>
<polyline points="472.7,340.8 472.7,355.8" fill="none" stroke="#00b050" stroke-width="1.4"/>
<polyline points="472.7,359.4 472.7,370.8" fill="none" stroke="#00b050" stroke-width="1.4"/>
<circle cx="472.7" cy="356" r="5.8" fill="none" stroke="#00b050" stroke-width="1.4"/>
<polyline points="470.4,354.3 475,354.3" fill="none" stroke="#00b050" stroke-width="1.4"/>
<polyline points="469.7,359.5 475.7,359.5" fill="none" stroke="#00b050" stroke-width="2"/>
<polyline points="472.3,380.4 472.3,395.2" fill="none" stroke="#00b050" stroke-width="1.4"/>
<polyline points="466.7,395.2 477.9,395.2" fill="none" stroke="#00b050" stroke-width="1.9"/>
<polyline points="467.1,395.5 472.3,399.7 477.5,395.5" fill="none" stroke="#00b050" stroke-width="1.3"/>
<polyline points="512.1,316.6 512.1,326.1" fill="none" stroke="#00b050" stroke-width="1.4"/>
<polyline points="512.1,336.8 512.1,346.4" fill="none" stroke="#00b050" stroke-width="1.4"/>
<polyline points="502.1,326.1 514.1,326.1" fill="none" stroke="#00b050" stroke-width="1.4"/>
<polyline points="502.1,336.8 514.1,336.8" fill="none" stroke="#00b050" stroke-width="1.4"/>
<rect x="506" y="326.1" width="12.4" height="10.7" rx="5.3" ry="5.3" fill="none" stroke="#00b050" stroke-width="1.4"/>
<rect x="469.1" y="298.7" width="5.8" height="5.8" fill="#ff0000"/>
<rect x="469.1" y="328.6" width="5.8" height="5.8" fill="#ff0000"/>
<rect x="469.1" y="338" width="5.8" height="5.8" fill="#ff0000"/>
<rect x="469.1" y="367.9" width="5.8" height="5.8" fill="#ff0000"/>
<rect x="469.1" y="377.5" width="5.8" height="5.8" fill="#ff0000"/>
<rect x="499.2" y="323.3" width="5.8" height="5.8" fill="#ff0000"/>
<rect x="499.2" y="334" width="5.8" height="5.8" fill="#ff0000"/>
<rect x="509" y="313.7" width="5.8" height="5.8" fill="#ff0000"/>
<rect x="509" y="343.6" width="5.8" height="5.8" fill="#ff0000"/>
<rect x="573.4" y="259" width="6" height="6" fill="#ff0000"/>
<rect x="603.6" y="259" width="4.4" height="6" fill="#ff0000"/>
<rect x="513.4" y="268.8" width="6" height="6" fill="#ff0000"/>
<rect x="543.4" y="268.8" width="6" height="6" fill="#ff0000"/>
<rect x="513.4" y="288.8" width="6" height="6" fill="#ff0000"/>
<rect x="543.4" y="288.8" width="6" height="6" fill="#ff0000"/>
<rect x="563.8" y="298.6" width="4.4" height="6" fill="#ff0000"/>
<rect x="592.4" y="298.6" width="6" height="6" fill="#ff0000"/>
<rect x="686.5" y="258.8" width="6" height="6" fill="#ff0000"/>
<rect x="686.5" y="268.7" width="6" height="6" fill="#ff0000"/>
<rect x="686.5" y="288.7" width="6" height="6" fill="#ff0000"/>
<rect x="686.5" y="298.5" width="6" height="6" fill="#ff0000"/>
<polyline points="675.2,157 675.2,144.2 773.9,144.2 773.9,192" fill="none" stroke="#35a4e4" stroke-width="1.4"/>
<polyline points="710,163.4 764.2,163.4 764.2,192" fill="none" stroke="#35a4e4" stroke-width="1.4"/>
<polyline points="783.4,192 783.4,144.2 877.5,144.2 877.5,148" fill="none" stroke="#35a4e4" stroke-width="1.4"/>
<polyline points="675.2,158.6 675.2,173.1" fill="none" stroke="#00b050" stroke-width="1.4"/>
<polyline points="675.2,176.7 675.2,188.3" fill="none" stroke="#00b050" stroke-width="1.4"/>
<circle cx="675.2" cy="173.3" r="5.8" fill="none" stroke="#00b050" stroke-width="1.4"/>
<polyline points="672.9,171.6 677.5,171.6" fill="none" stroke="#00b050" stroke-width="1.4"/>
<polyline points="672.2,176.8 678.2,176.8" fill="none" stroke="#00b050" stroke-width="2"/>
<rect x="672.4" y="156.7" width="5.6" height="5" fill="#ff0000"/>
<rect x="672.4" y="186.3" width="5.6" height="5" fill="#ff0000"/>
<polyline points="675.2,188.3 675.2,203" fill="none" stroke="#00b050" stroke-width="1.4"/>
<polyline points="669.6,203 680.8,203" fill="none" stroke="#00b050" stroke-width="1.9"/>
<polyline points="670,203.3 675.2,207.5 680.4,203.3" fill="none" stroke="#00b050" stroke-width="1.3"/>
<rect x="664.1" y="158.1" width="21" height="30" fill="none" stroke="#ffffff" stroke-width="4.2"/>
<polyline points="710,163.4 710,178.4" fill="none" stroke="#00b050" stroke-width="1.4"/>
<polyline points="704,178.4 716,178.4" fill="none" stroke="#00b050" stroke-width="1.9"/>
<polyline points="704.4,178.7 710,183.8 715.6,178.7" fill="none" stroke="#00b050" stroke-width="1.3"/>
<rect x="629.6" y="135.7" width="83.9" height="69.9" fill="none" stroke="#ff0000" stroke-width="3.3"/>
<rect x="706.8" y="160.6" width="6.4" height="5.6" fill="#ff0000"/>
<rect x="761.4" y="189.8" width="5.6" height="5.6" fill="#ff0000"/>
<rect x="771.2" y="189.8" width="5.6" height="5.6" fill="#ff0000"/>
<rect x="780.8" y="189.8" width="5.6" height="5.6" fill="#ff0000"/>
<polyline points="877.4,148.7 877.4,162.8" fill="none" stroke="#00b050" stroke-width="1.4"/>
<polyline points="877.4,166.4 877.4,177.7" fill="none" stroke="#00b050" stroke-width="1.4"/>
<circle cx="877.4" cy="163" r="5.8" fill="none" stroke="#00b050" stroke-width="1.4"/>
<polyline points="875.1,161.3 879.7,161.3" fill="none" stroke="#00b050" stroke-width="1.4"/>
<polyline points="874.4,166.5 880.4,166.5" fill="none" stroke="#00b050" stroke-width="2"/>
<polyline points="877.4,177.7 877.4,192.6" fill="none" stroke="#00b050" stroke-width="1.4"/>
<polyline points="871.8,192.6 883,192.6" fill="none" stroke="#00b050" stroke-width="1.9"/>
<polyline points="872.2,192.9 877.4,197.1 882.6,192.9" fill="none" stroke="#00b050" stroke-width="1.3"/>
<rect x="874.9" y="145.7" width="6" height="6" fill="#ff0000"/>
<rect x="874.9" y="174.7" width="6" height="6" fill="#ff0000"/>
<polyline points="853.2,261.8 976.4,261.8 976.4,414.6" fill="none" stroke="#35a4e4" stroke-width="1.4"/>
<polyline points="853.2,271.7 912.3,271.7 912.3,414.6" fill="none" stroke="#35a4e4" stroke-width="1.4"/>
<rect x="850.2" y="258.8" width="6" height="6" fill="#ff0000"/>
<rect x="850.2" y="268.7" width="6" height="6" fill="#ff0000"/>
<polyline points="912.3,417.6 912.3,420 916.7,422.3 906.5,425.2 916.7,429.2 906.5,431.8 916.7,434.8 906.5,437.3 912.3,438.6 912.3,441.9" fill="none" stroke="#00b050" stroke-width="1.3"/>
<polyline points="976.4,417.6 976.4,420 980.8,422.3 970.6,425.2 980.8,429.2 970.6,431.8 980.8,434.8 970.6,437.3 976.4,438.6 976.4,441.9" fill="none" stroke="#00b050" stroke-width="1.3"/>
<polyline points="912.3,444.6 912.3,470 976.4,470 976.4,444.6" fill="none" stroke="#35a4e4" stroke-width="1.4"/>
<rect x="909.3" y="411.9" width="5.8" height="5.8" fill="#ff0000"/>
<rect x="909.3" y="441.9" width="5.8" height="5.8" fill="#ff0000"/>
<rect x="973.4" y="411.9" width="5.8" height="5.8" fill="#ff0000"/>
<rect x="973.4" y="441.9" width="5.8" height="5.8" fill="#ff0000"/>
<polyline points="947,470 947,481" fill="none" stroke="#00b050" stroke-width="1.4"/>
<polyline points="941,481 952.6,481" fill="none" stroke="#00b050" stroke-width="1.4"/>
<path d="M941 487.4Q947 482.6 953 487.4" fill="none" stroke="#00b050" stroke-width="1.4"/>
<polyline points="947,485 947,513.8" fill="none" stroke="#00b050" stroke-width="1.4"/>
<polyline points="941,513.8 953,513.8" fill="none" stroke="#00b050" stroke-width="1.9"/>
<polyline points="941.4,514.1 947,519.4 952.6,514.1" fill="none" stroke="#00b050" stroke-width="1.3"/>
<rect x="944" y="466.5" width="6" height="6" fill="#ff0000"/>
<rect x="944" y="496.4" width="6" height="6" fill="#ff0000"/>
<polyline points="754,366 754,470.2 679.7,470.2 679.7,518" fill="none" stroke="#35a4e4" stroke-width="1.4"/>
<polyline points="763.8,366 763.8,485.5 729.9,485.5 729.9,518" fill="none" stroke="#35a4e4" stroke-width="1.4"/>
<polyline points="783.3,366 783.3,519" fill="none" stroke="#35a4e4" stroke-width="1.4"/>
<polyline points="793.5,366 793.5,509.7 818.5,509.7 818.5,518" fill="none" stroke="#35a4e4" stroke-width="1.4"/>
<polyline points="812.6,366 812.6,370.5 853,370.5 853,386" fill="none" stroke="#35a4e4" stroke-width="1.4"/>
<polyline points="852.8,414.6 852.8,484" fill="none" stroke="#35a4e4" stroke-width="1.4"/>
<polyline points="852.8,514 852.8,558.4" fill="none" stroke="#35a4e4" stroke-width="1.4"/>
<polyline points="853.2,389 853.2,391.2 857.6,393.4 847.4,396.1 857.6,399.9 847.4,402.4 857.6,405.2 847.4,407.6 853.2,408.8 853.2,412" fill="none" stroke="#00b050" stroke-width="1.3"/>
<rect x="751.1" y="362.8" width="5.8" height="5.8" fill="#ff0000"/>
<rect x="760.9" y="362.8" width="5.8" height="5.8" fill="#ff0000"/>
<rect x="780.5" y="362.8" width="5.8" height="5.8" fill="#ff0000"/>
<rect x="790.5" y="362.8" width="5.8" height="5.8" fill="#ff0000"/>
<rect x="810.7" y="362.8" width="5.8" height="5.8" fill="#ff0000"/>
<rect x="850.4" y="383.3" width="6" height="6" fill="#ff0000"/>
<rect x="850.4" y="411.7" width="6" height="6" fill="#ff0000"/>
<polyline points="679.8,551 679.8,558" fill="none" stroke="#35a4e4" stroke-width="1.4"/>
<polyline points="729.9,551 729.9,558" fill="none" stroke="#35a4e4" stroke-width="1.4"/>
<polyline points="818.5,551 818.5,558" fill="none" stroke="#35a4e4" stroke-width="1.4"/>
<polyline points="783.3,548.4 783.3,558" fill="none" stroke="#35a4e4" stroke-width="1.4"/>
<polyline points="679.8,518.6 679.8,533" fill="none" stroke="#00b050" stroke-width="1.4"/>
<polyline points="679.8,536.6 679.8,548.4" fill="none" stroke="#00b050" stroke-width="1.4"/>
<circle cx="679.8" cy="533.2" r="5.8" fill="none" stroke="#00b050" stroke-width="1.4"/>
<polyline points="677.5,531.5 682.1,531.5" fill="none" stroke="#00b050" stroke-width="1.4"/>
<polyline points="676.8,536.7 682.8,536.7" fill="none" stroke="#00b050" stroke-width="2"/>
<polyline points="663.4,535.6 666,535.6 666,532.4 670,532.4 670,533.6 674,533.6" fill="none" stroke="#00b050" stroke-width="1.3"/>
<rect x="677" y="517" width="5.6" height="4" fill="#ff0000"/>
<rect x="676.9" y="545.8" width="5.8" height="5.2" fill="#ff0000"/>
<polyline points="729.9,518.6 729.9,533" fill="none" stroke="#00b050" stroke-width="1.4"/>
<polyline points="729.9,536.6 729.9,548.4" fill="none" stroke="#00b050" stroke-width="1.4"/>
<circle cx="729.9" cy="533.2" r="5.8" fill="none" stroke="#00b050" stroke-width="1.4"/>
<polyline points="727.6,531.5 732.2,531.5" fill="none" stroke="#00b050" stroke-width="1.4"/>
<polyline points="726.9,536.7 732.9,536.7" fill="none" stroke="#00b050" stroke-width="2"/>
<polyline points="713.5,535.6 716.1,535.6 716.1,532.4 720.1,532.4 720.1,533.6 724.1,533.6" fill="none" stroke="#00b050" stroke-width="1.3"/>
<rect x="727.1" y="517" width="5.6" height="4" fill="#ff0000"/>
<rect x="727" y="545.8" width="5.8" height="5.2" fill="#ff0000"/>
<polyline points="783.3,518.6 783.3,533" fill="none" stroke="#00b050" stroke-width="1.4"/>
<polyline points="783.3,536.6 783.3,548.4" fill="none" stroke="#00b050" stroke-width="1.4"/>
<circle cx="783.3" cy="533.2" r="5.8" fill="none" stroke="#00b050" stroke-width="1.4"/>
<polyline points="781,531.5 785.6,531.5" fill="none" stroke="#00b050" stroke-width="1.4"/>
<polyline points="780.3,536.7 786.3,536.7" fill="none" stroke="#00b050" stroke-width="2"/>
<rect x="780.5" y="517" width="5.6" height="4" fill="#ff0000"/>
<rect x="780.4" y="545.8" width="5.8" height="5.2" fill="#ff0000"/>
<polyline points="818.5,518.6 818.5,533" fill="none" stroke="#00b050" stroke-width="1.4"/>
<polyline points="818.5,536.6 818.5,548.4" fill="none" stroke="#00b050" stroke-width="1.4"/>
<circle cx="818.5" cy="533.2" r="5.8" fill="none" stroke="#00b050" stroke-width="1.4"/>
<polyline points="816.2,531.5 820.8,531.5" fill="none" stroke="#00b050" stroke-width="1.4"/>
<polyline points="815.5,536.7 821.5,536.7" fill="none" stroke="#00b050" stroke-width="2"/>
<rect x="815.7" y="517" width="5.6" height="4" fill="#ff0000"/>
<rect x="815.6" y="545.8" width="5.8" height="5.2" fill="#ff0000"/>
<polyline points="679.8,558.4 679.8,573.6" fill="none" stroke="#00b050" stroke-width="1.4"/>
<polyline points="674.2,573.6 685.4,573.6" fill="none" stroke="#00b050" stroke-width="1.9"/>
<polyline points="674.6,573.9 679.8,578.1 685,573.9" fill="none" stroke="#00b050" stroke-width="1.3"/>
<polyline points="729.9,558.4 729.9,573.6" fill="none" stroke="#00b050" stroke-width="1.4"/>
<polyline points="724.3,573.6 735.5,573.6" fill="none" stroke="#00b050" stroke-width="1.9"/>
<polyline points="724.7,573.9 729.9,578.1 735.1,573.9" fill="none" stroke="#00b050" stroke-width="1.3"/>
<polyline points="783.3,558.4 783.3,573.6" fill="none" stroke="#00b050" stroke-width="1.4"/>
<polyline points="777.7,573.6 788.9,573.6" fill="none" stroke="#00b050" stroke-width="1.9"/>
<polyline points="778.1,573.9 783.3,578.1 788.5,573.9" fill="none" stroke="#00b050" stroke-width="1.3"/>
<polyline points="818.5,558.4 818.5,573.6" fill="none" stroke="#00b050" stroke-width="1.4"/>
<polyline points="812.9,573.6 824.1,573.6" fill="none" stroke="#00b050" stroke-width="1.9"/>
<polyline points="813.3,573.9 818.5,578.1 823.7,573.9" fill="none" stroke="#00b050" stroke-width="1.3"/>
<polyline points="852.8,558.4 852.8,573.6" fill="none" stroke="#00b050" stroke-width="1.4"/>
<polyline points="847.2,573.6 858.4,573.6" fill="none" stroke="#00b050" stroke-width="1.9"/>
<polyline points="847.6,573.9 852.8,578.1 858,573.9" fill="none" stroke="#00b050" stroke-width="1.3"/>
<rect x="669.7" y="519.1" width="20.6" height="29.8" fill="none" stroke="#ffffff" stroke-width="4.2"/>
<rect x="718.9" y="519.1" width="21" height="29.8" fill="none" stroke="#ffffff" stroke-width="4.2"/>
<rect x="807.6" y="517.6" width="21.9" height="32.7" fill="none" stroke="#ffffff" stroke-width="1.3"/>
<rect x="809.2" y="519.2" width="18.8" height="29.6" fill="none" stroke="#ff8a1c" stroke-width="2"/>
<rect x="810.6" y="520.6" width="15.9" height="26.7" fill="none" stroke="#ffffff" stroke-width="1.1"/>
<rect x="639.3" y="502.7" width="224.4" height="62.2" fill="none" stroke="#ff0000" stroke-width="3.4"/>
<polyline points="852.7,483.8 852.7,498" fill="none" stroke="#00b050" stroke-width="1.4"/>
<polyline points="852.7,501.6 852.7,513.7" fill="none" stroke="#00b050" stroke-width="1.4"/>
<circle cx="852.7" cy="498.2" r="6" fill="none" stroke="#00b050" stroke-width="1.4"/>
<polyline points="850.4,496.5 855,496.5" fill="none" stroke="#00b050" stroke-width="1.4"/>
<polyline points="849.7,501.7 855.7,501.7" fill="none" stroke="#00b050" stroke-width="2"/>
<rect x="849.8" y="480.8" width="6" height="6" fill="#ff0000"/>
<rect x="849.8" y="510.7" width="6" height="6" fill="#ff0000"/>
<rect x="676.9" y="555.4" width="5.8" height="5.8" fill="#ff0000"/>
<rect x="727" y="555.4" width="5.8" height="5.8" fill="#ff0000"/>
<rect x="780.4" y="555.4" width="5.8" height="5.8" fill="#ff0000"/>
<rect x="815.6" y="555.4" width="5.8" height="5.8" fill="#ff0000"/>
<rect x="849.9" y="555.4" width="5.8" height="5.8" fill="#ff0000"/>
<g fill="#fff" stroke="#fff" stroke-width=".25" font-size="21.4" style="font-family:'DejaVu Sans Light','DejaVu Sans','Liberation Sans',sans-serif;font-weight:200">
<text y="57"><tspan x="423.8" textLength="32.6" lengthAdjust="spacingAndGlyphs">(a)</tspan> <tspan x="465.8" textLength="118.6" lengthAdjust="spacingAndGlyphs">Differential</tspan> <tspan x="592.4" textLength="95.2" lengthAdjust="spacingAndGlyphs">transient</tspan> <tspan x="697.4" textLength="44.6" lengthAdjust="spacingAndGlyphs">gain</tspan> <tspan x="751.8" textLength="53.3" lengthAdjust="spacingAndGlyphs">error</tspan></text>
<text y="79.6"><tspan x="423.8" textLength="32.6" lengthAdjust="spacingAndGlyphs">(b)</tspan> <tspan x="465.8" textLength="54.8" lengthAdjust="spacingAndGlyphs">Input</tspan> <tspan x="529.4" textLength="65.2" lengthAdjust="spacingAndGlyphs">Offset</tspan> <tspan x="603.2" textLength="79.4" lengthAdjust="spacingAndGlyphs">Voltage</tspan></text>
</g>
<g fill="#e4e4e4" stroke="#000" stroke-width="1.15" font-size="55" style="font-family:'DejaVu Sans Light','DejaVu Sans','Liberation Sans',sans-serif;font-weight:200"><text x="716.6" y="296.5">S</text><text x="751.6" y="297" transform="translate(751.6 297) skewX(-16) translate(-751.6 -297)">/</text><text x="780.2" y="296.5" textLength="41.2" lengthAdjust="spacingAndGlyphs">H</text></g>
</svg>
</div></body></html>
